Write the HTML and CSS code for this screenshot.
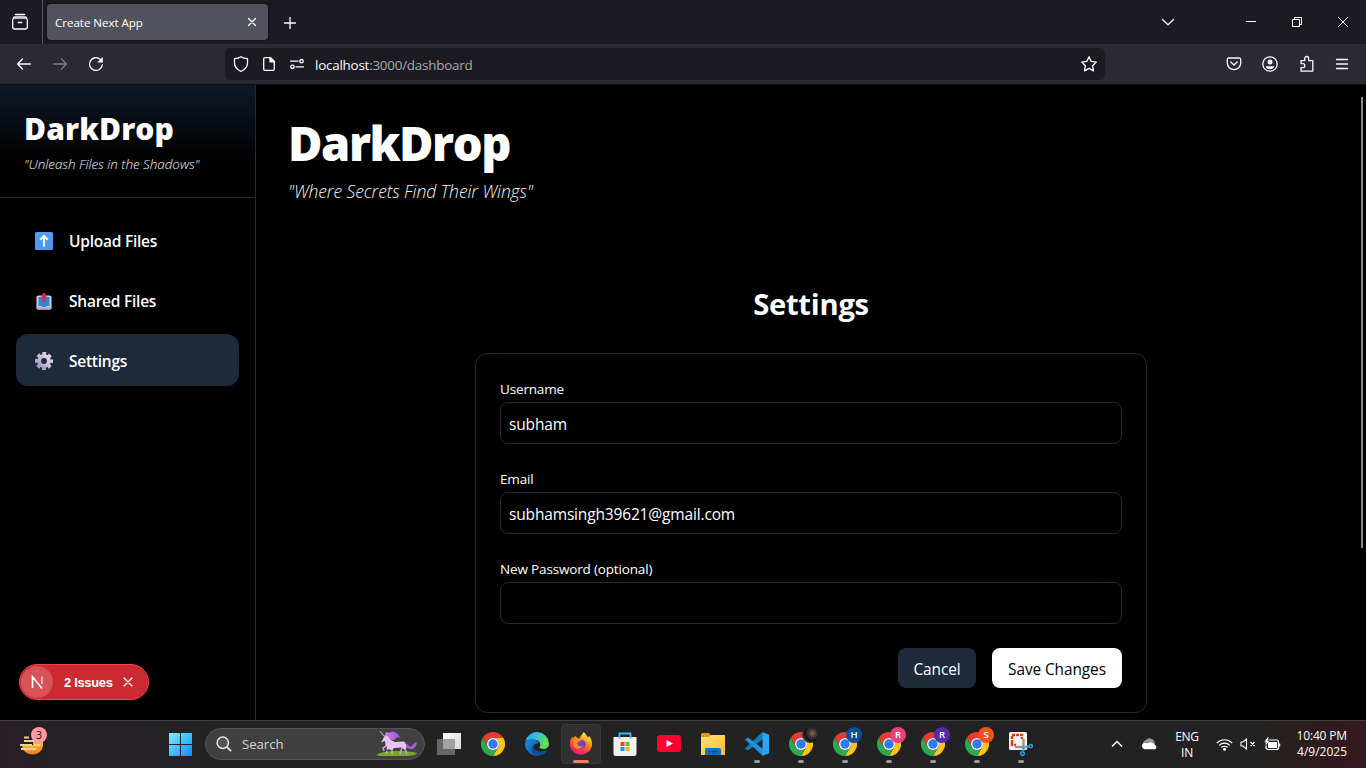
FILE: index.html
```html
<!DOCTYPE html>
<html lang="en">
<head>
<meta charset="utf-8">
<title>Create Next App</title>
<link rel="stylesheet" href="styles.css">
</head>
<body>
<svg class="defs" width="0" height="0">
  <defs>
    <linearGradient id="win" gradientUnits="userSpaceOnUse" x1="0" y1="0" x2="23" y2="23"><stop offset="0" stop-color="#7df0ff"/><stop offset="1" stop-color="#0a8cff"/></linearGradient>
    <linearGradient id="edgeA" x1="0" y1="0" x2="1" y2=".3"><stop offset="0" stop-color="#2b9fe8"/><stop offset=".5" stop-color="#34c1e0"/><stop offset="1" stop-color="#66e04a"/></linearGradient>
    <linearGradient id="edgeB" x1="0" y1="0" x2="1" y2="1"><stop offset="0" stop-color="#1b8ee0"/><stop offset="1" stop-color="#0c57a8"/></linearGradient>
    <linearGradient id="fox" x1=".8" y1="0" x2=".3" y2="1"><stop offset="0" stop-color="#fff44f"/><stop offset=".4" stop-color="#ff980e"/><stop offset=".75" stop-color="#ff3647"/><stop offset="1" stop-color="#e31587"/></linearGradient>
    <linearGradient id="folder" x1="0" y1="0" x2="1" y2="1"><stop offset="0" stop-color="#ffe07a"/><stop offset="1" stop-color="#fcbc29"/></linearGradient>
    <linearGradient id="up" x1="0" y1="0" x2="1" y2="1"><stop offset="0" stop-color="#4ba3f5"/><stop offset="1" stop-color="#5b8fee"/></linearGradient>
    <linearGradient id="gear" x1="1" y1="0" x2="0" y2="1"><stop offset="0" stop-color="#e6dfeb"/><stop offset="1" stop-color="#a995c2"/></linearGradient>
    <linearGradient id="bun" x1="0" y1="0" x2="0" y2="1"><stop offset="0" stop-color="#f9b52e"/><stop offset="1" stop-color="#f07a1c"/></linearGradient>
    <linearGradient id="mane" x1="0" y1="0" x2="1" y2="0"><stop offset="0" stop-color="#e07af0"/><stop offset="1" stop-color="#8a55d8"/></linearGradient>
    <linearGradient id="paneA" x1="0" y1="0" x2="1" y2="1"><stop offset="0" stop-color="#fff"/><stop offset="1" stop-color="#d8d8d8"/></linearGradient>
    <symbol id="chrome" viewBox="0 0 24 24">
      <path d="M1.600 6A12 12 0 0 1 22.400 6H12a6 6 0 0 0-5.200 9z" fill="#e33b2e"/>
      <path d="M22.400 6A12 12 0 0 1 12 24l5.200-9A6 6 0 0 0 12 6z" fill="#fcc31e"/>
      <path d="M1.600 6A12 12 0 0 0 12 24l5.200-9A6 6 0 0 1 6.800 15z" fill="#2da94f"/>
      <circle cx="12" cy="12" r="6" fill="#fff"/><circle cx="12" cy="12" r="4.700" fill="#2f7bee"/>
    </symbol>
  </defs>
</svg>

<header class="tabbar">
  <div class="tabview"><svg width="18" height="18" viewBox="0 0 18 18" class="line"><path d="M4.500 1.500h9M2.500 4.700a2 2 0 0 1 1.500-.8h10a2 2 0 0 1 1.500.8"/><rect x="1.700" y="5.200" width="14.600" height="10.800" rx="2"/><path d="M7.300 9.500h3.400"/></svg></div>
  <div class="tab"><span>Create Next App</span><svg width="10" height="10" viewBox="0 0 10 10" class="line"><path d="M1.500 1.500l7 7M8.500 1.500l-7 7"/></svg></div>
  <svg class="line newtab" width="14" height="14" viewBox="0 0 14 14"><path d="M7 1.500v11M1.500 7h11"/></svg>
  <div class="wincontrols">
    <svg class="line" width="14" height="14" viewBox="0 0 14 14"><path d="M1.500 4.500L7 9.800l5.500-5.300"/></svg>
    <svg class="thin" width="12" height="12" viewBox="0 0 12 12"><path d="M1 5.500h10"/></svg>
    <svg class="thin" width="12" height="12" viewBox="0 0 12 12"><path d="M1.500 3.500h7v7h-7zM3.500 3V1.500h7v7H9"/></svg>
    <svg class="thin" width="12" height="12" viewBox="0 0 12 12"><path d="M1 1l10 10M11 1L1 11"/></svg>
  </div>
</header>

<div class="toolbar">
  <div class="navbuttons">
    <svg class="line" width="16" height="16" viewBox="0 0 16 16"><path d="M14.500 8H1.500M6.500 3L1.500 8l5 5"/></svg>
    <svg class="line dim" width="16" height="16" viewBox="0 0 16 16"><path d="M1.500 8h13M9.500 3l5 5-5 5"/></svg>
    <svg class="line" width="16" height="16" viewBox="0 0 16 16"><path d="M14.300 8.800A6.400 6.400 0 1 1 12.300 3.400"/><path d="M14.800 1v5.600H9.200z" fill="#fbfbfe" stroke="none"/></svg>
  </div>
  <div class="urlbar">
    <svg class="line" width="16" height="18" viewBox="0 0 16 18"><path d="M8 1.700C6.200 3 4 3.500 1.500 3.700V8c0 3.500 2.500 6.500 6.500 8.500 4-2 6.500-5 6.500-8.500V3.700C12 3.500 9.800 3 8 1.700z"/></svg>
    <svg class="line" width="14" height="16" viewBox="0 0 14 16"><path d="M3 1.700h5.500l3.800 3.800V13a1.300 1.300 0 0 1-1.300 1.300H3A1.300 1.300 0 0 1 1.700 13V3A1.300 1.300 0 0 1 3 1.700z"/><path d="M8 1.500v4.300h4.500z" fill="#fbfbfe"/></svg>
    <svg class="line" width="16" height="12" viewBox="0 0 16 12"><path d="M1.500 3.200h7.500M7 8.800h7.500"/><circle cx="12.500" cy="3.200" r="1.700"/><circle cx="3.500" cy="8.800" r="1.700"/></svg>
    <span class="url">localhost<i>:3000/dashboard</i></span>
    <svg class="line star" width="18" height="18" viewBox="0 0 18 18"><path d="M9 1.700l2.200 4.700 5.100.7-3.700 3.600.9 5.200L9 13.400l-4.500 2.500.9-5.200L1.700 7.100l5.100-.7z"/></svg>
  </div>
  <div class="tools">
    <svg class="line" width="16" height="16" viewBox="0 0 16 16"><path d="M2.600 2h10.800A1.300 1.300 0 0 1 14.700 3.300V7A6.700 6.700 0 0 1 1.300 7V3.300A1.300 1.300 0 0 1 2.600 2zM4.800 6L8 9l3.200-3"/></svg>
    <svg class="line" width="16" height="16" viewBox="0 0 16 16"><circle cx="8" cy="8" r="7.200"/><circle cx="8" cy="5.900" r="2.500" fill="#fbfbfe" stroke="none"/><path d="M3.800 10.200h8.400c0 1.700-2 3-4.200 3s-4.200-1.300-4.200-3z" fill="#fbfbfe" stroke="none"/></svg>
    <svg class="line" width="16" height="18" viewBox="0 0 16 18"><path d="M2 5.700h3.700V3.500a2 2 0 0 1 4 0v2.200h4.100v10.500H2v-3.500h1.800a2 2 0 0 0 0-4H2z"/></svg>
    <svg class="line" width="14" height="14" viewBox="0 0 14 14"><path d="M1.500 2.500h11M1.500 7h11M1.500 11.500h11"/></svg>
  </div>
</div>

<div class="page">
  <aside class="sidebar">
    <div class="brand">
      <h2>DarkDrop</h2>
      <p>"Unleash Files in the Shadows"</p>
    </div>
    <nav>
      <a><svg width="18" height="18" viewBox="0 0 18 18"><rect width="18" height="18" rx="1.500" fill="url(#up)"/><path d="M9 14.500v-10M5.300 7.700L9 4l3.700 3.700" fill="none" stroke="#fff" stroke-width="2"/></svg><span>Upload Files</span></a>
      <a><svg width="18" height="18" viewBox="0 0 18 18"><rect x="1.500" y="3.500" width="15" height="14" rx="2" fill="#d5cde0"/><path d="M3.500 5h11v9h-3l-1 1.500h-3l-1-1.500h-3z" fill="#2d86d8"/><path d="M1.500 15h15v1.500a1 1 0 0 1-1 1h-13a1 1 0 0 1-1-1z" fill="#bda9d8"/><path d="M7.300 9.500V4.500H5.500L9 .5l3.500 4h-1.800v5z" fill="#dc2450"/></svg><span>Shared Files</span></a>
      <a class="active"><svg width="18" height="18" viewBox="0 0 18 18"><g fill="none" stroke="url(#gear)"><circle cx="9" cy="9" r="4.900" stroke-width="4"/><circle cx="9" cy="9" r="7.700" stroke-width="2.600" stroke-dasharray="3.800 2.248" stroke-dashoffset="1.900"/></g></svg><span>Settings</span></a>
    </nav>
    <div class="issues">
      <span class="nlogo"><svg width="16" height="16" viewBox="0 0 16 16"><path d="M3.500 14V2.800L13 14.500" fill="none" stroke="#fff" stroke-width="1.600"/><path d="M13 2.500v7.500" stroke="#fff" stroke-opacity=".7" stroke-width="1.500"/></svg></span>
      <b>2 Issues</b>
      <svg width="10" height="10" viewBox="0 0 10 10" class="line"><path d="M1 1l8 8M9 1L1 9"/></svg>
    </div>
  </aside>

  <main>
    <h1>DarkDrop</h1>
    <p class="tagline">"Where Secrets Find Their Wings"</p>
    <section>
      <h3>Settings</h3>
      <form class="card">
        <div class="field"><label>Username</label><div class="input">subham</div></div>
        <div class="field"><label>Email</label><div class="input">subhamsingh39621@gmail.com</div></div>
        <div class="field"><label>New Password (optional)</label><div class="input"></div></div>
        <div class="actions"><button type="button" class="cancel">Cancel</button><button type="button" class="save">Save Changes</button></div>
      </form>
    </section>
    <div class="scrollthumb"></div>
  </main>
</div>

<footer class="taskbar">
  <div class="widget"><svg width="26" height="20" viewBox="0 0 26 20"><path d="M2 10h21a10 9 0 0 1-21 0z" fill="url(#bun)"/><path d="M13 5h10v6H13z" fill="#f9b52e"/><path d="M4 2.500h5M4 6h10M0 10h12m2 0h6M1 14h15" stroke="#f3d28c" stroke-width="2"/></svg><span class="count">3</span></div>
  <div class="apps">
    <div class="app"><svg width="23" height="23" viewBox="0 0 23 23"><path d="M0 0h11v11H0zM12 0h11v11H12zM0 12h11v11H0zM12 12h11v11H12z" fill="url(#win)"/></svg></div>
    <div class="search">
      <svg width="16" height="16" viewBox="0 0 16 16"><circle cx="6.800" cy="6.800" r="5.700" fill="#555" stroke="#e8e8e8" stroke-width="1.500"/><path d="M11 11l4 4" stroke="#e8e8e8" stroke-width="1.800"/></svg>
      <span>Search</span>
      <svg class="unicorn" width="42" height="26" viewBox="0 0 42 26"><path d="M0 24c7-4.500 28-5 41-2 0 2-5 3-14 3H4z" fill="#79a92c"/><path d="M11 20l-1 2.500M16 18v5M29 18l2 5M26 17l-2 6M10 15l-3 2 1 3M13 15l-2 4" stroke="#c9a0df" stroke-width="1.600" fill="none"/><path d="M9 4l3 1 3 4 4 2 8-.5c3 0 4 3 3.500 7l-2 1-3-2-7 .5-3 2-4-1-2-4-.5-4-4 1.500L6 10z" fill="#e6c5ef"/><path d="M9 4l1-3c2 1 3 .5 5 0 4-1 8 2 9 6-2-1-4-.5-5 1.500-3 1.500-5-.5-6-2.500z" fill="url(#mane)"/><path d="M28 12c3-1 4 4 6.500 3.500 2.500 0 2-3.500 6.500-4-1 4.500-3 7-6.500 6.500-4 0-3-4-6.500-6z" fill="#a65ce0"/><path d="M4 0l4 5" stroke="#77b7e0" stroke-width="1.200"/></svg>
    </div>
    <div class="app"><svg width="24" height="22" viewBox="0 0 24 22"><path d="M6 0h18v16H6z" fill="url(#paneA)"/><path d="M0 6h18v16H0z" fill="#666"/><path d="M6 6h12v10H6z" fill="#a2a2a2"/></svg></div>
    <div class="app"><svg width="24" height="24"><use href="#chrome"/></svg></div>
    <div class="app"><svg width="24" height="24" viewBox="0 0 24 24"><path d="M.3 9.500A12 12 0 0 1 24 11.500c.2 3.500-2.300 5.500-5.300 5.500-3 0-4.700-1-4.200-2 1.800-2.500.5-6-3.500-7C7 7 2.500 7.500.3 9.500z" fill="url(#edgeA)"/><path d="M.1 11C2 7 7.500 6.500 10.500 8c2 1 3 2.700 2.700 3.500-5-1-7 6-2 10.500l1.500 1.900A12 12 0 0 1 .1 11z" fill="url(#edgeB)"/><path d="M9 12c-2 6 4 9.500 13.500 6A12 12 0 0 1 12.500 24C6 22 5 15.500 9 12z" fill="#124d91"/></svg></div>
    <div class="app current"><svg width="24" height="24" viewBox="0 0 24 24"><path d="M14.500 0c2.500 1.800 3 3.800 4.200 5.300C20.500 4.500 20.300 4 20.300 4 23 8 23.300 11 22.900 14A11.300 11.300 0 0 1 .8 13.500C.5 9 1.800 6.500 3.400 4.400l.5 2C5.200 4.800 7 4 7 4c.2 1.500 1.500 2.200 3.500 2.400C11.500 3.500 13.500 2.500 14.500 0z" fill="url(#fox)"/><circle cx="12.300" cy="12.300" r="4.600" fill="#7542c8"/><path d="M4 8c3-2.500 7-1 8.500 1-2.500 0-3 1-4.500 2 .5 3 3.500 4 6 3-2 4-8 3.500-10-.5z" fill="#ff8a1c"/></svg></div>
    <div class="app"><svg width="24" height="24" viewBox="0 0 24 24"><path d="M6.500 7V1.500h11V7" fill="none" stroke="#36b8ee" stroke-width="1.800"/><path d="M.5 5h23v16.500a2.500 2.500 0 0 1-2.500 2.500H3A2.500 2.500 0 0 1 .5 21.500z" fill="#f1f1f1"/><path d="M6.500 5v1.500M17.500 5v1.500" stroke="#36b8ee" stroke-width="1.800"/><path d="M7.500 10h4v4h-4z" fill="#e84a26"/><path d="M12.500 10h4v4h-4z" fill="#7cb713"/><path d="M7.500 15h4v4h-4z" fill="#149df0"/><path d="M12.500 15h4v4h-4z" fill="#fbb313"/></svg></div>
    <div class="app"><svg width="24" height="18" viewBox="0 0 24 18"><rect width="24" height="17" rx="3" fill="#ff0033"/><path d="M9.500 5l6.500 3.500L9.500 12z" fill="#fff"/></svg></div>
    <div class="app"><svg width="24" height="22" viewBox="0 0 24 22"><path d="M0 1.500A1.500 1.500 0 0 1 1.500 0H8l2 2.500V5H0z" fill="#dc9c12"/><path d="M0 4h8l2.500-2H24v20H0z" fill="url(#folder)"/><path d="M4 22v-5a2 2 0 0 1 2-2h12a2 2 0 0 1 2 2v5z" fill="#1072c6"/><path d="M7 18h10v1.500H7z" fill="#0a4f92"/></svg></div>
    <div class="app open"><svg width="24" height="24" viewBox="0 0 24 24"><path d="M17.500 0l.5 7L3 18.500 0 16.500z" fill="#0e7dc4"/><path d="M0 7.500l3-2L18 17v7z" fill="#1f93df"/><path d="M17.500 0L24 2.800v18.400L17.500 24z" fill="#2aa3f2"/></svg></div>
    <div class="app open"><svg width="24" height="24"><use href="#chrome"/></svg><span class="badge photo"></span></div>
    <div class="app open"><svg width="24" height="24"><use href="#chrome"/></svg><span class="badge blue">H</span></div>
    <div class="app open"><svg width="24" height="24"><use href="#chrome"/></svg><span class="badge pink">R</span></div>
    <div class="app open"><svg width="24" height="24"><use href="#chrome"/></svg><span class="badge purple">R</span></div>
    <div class="app open"><svg width="24" height="24"><use href="#chrome"/></svg><span class="badge orange">S</span></div>
    <div class="app open"><svg width="24" height="24" viewBox="0 0 24 24"><rect width="18" height="18" rx="1.500" fill="#f5f5f5"/><path d="M3 11V3h10v4M3 11v2h4" fill="none" stroke="#e03c14" stroke-width="2.400" stroke-dasharray="3 1"/><path d="M14.500 7v10M6 15h13" stroke="#9a9a9a" stroke-width="2.400"/><path d="M14.500 15v4M18 14.500h2" stroke="#28a2e0" stroke-width="2"/><circle cx="13.500" cy="21.500" r="1.800" fill="none" stroke="#28a2e0" stroke-width="1.500"/><circle cx="21.800" cy="14" r="1.600" fill="none" stroke="#28a2e0" stroke-width="1.500"/></svg></div>
  </div>
  <div class="tray">
    <svg class="caret" width="12" height="8" viewBox="0 0 12 8"><path d="M1 6.500l5-5 5 5" fill="none" stroke="#fff" stroke-width="1.400"/></svg>
    <svg class="cloud" width="17" height="12" viewBox="0 0 17 12"><path d="M2.500 9A4.500 4.500 0 0 1 5 2a5 5 0 0 1 8.500 2l1 5z" fill="#989898"/><path d="M3.500 11.200a3.200 3.200 0 0 1 0-6.300l3 .3a5 5 0 0 1 7 1.600 2.300 2.300 0 0 1 .5 4.400z" fill="#fff"/></svg>
    <div class="lang"><span>ENG</span><span>IN</span></div>
    <svg class="wifi" width="17" height="13" viewBox="0 0 17 13"><g fill="none" stroke="#fff" stroke-width="1.200"><path d="M.8 5a10.800 10.800 0 0 1 15.400 0M3.200 7.400a7.400 7.400 0 0 1 10.600 0M5.500 9.500a4.200 4.200 0 0 1 6 0"/></g><circle cx="8.500" cy="11.300" r="1.500" fill="#fff"/></svg>
    <svg class="mute" width="16" height="12" viewBox="0 0 16 12"><path d="M1 4h2l3.500-3v10L3 8H1zM10.500 4l4 4M14.500 4l-4 4" fill="none" stroke="#fff" stroke-width="1.100"/></svg>
    <svg class="battery" width="17" height="14" viewBox="0 0 17 14"><rect x="2" y="3" width="12.500" height="9.500" rx="2" fill="none" stroke="#fff" stroke-width="1.200"/><path d="M4 5h9v6H4z" fill="#fff"/><path d="M15.500 6.500v3" stroke="#fff" stroke-width="1.500"/><path d="M3.500 0L0 5h2L1.200 9 6 3.500H3.800L5 0z" fill="#fff" stroke="#222" stroke-width=".5"/></svg>
    <div class="clock"><span class="time">10:40 PM</span><span class="date">4/9/2025</span></div>
  </div>
</footer>
</body>
</html>
```
FILE: styles.css
```css
* { box-sizing: border-box; }
body {
  margin: 0;
  width: 1366px;
  height: 768px;
  overflow: hidden;
  display: flex;
  flex-direction: column;
  background: #000;
  color: #fff;
  font-family: "Open Sans", "Noto Sans", sans-serif;
}
h1, h2, h3, p { margin: 0; }
svg { display: block; flex: none; }
.defs { position: absolute; }
.line { fill: none; stroke: #fbfbfe; stroke-width: 1.3; stroke-linejoin: round; stroke-linecap: round; }
.thin { fill: none; stroke: #fff; stroke-width: 1; }
.dim { opacity: .4; }

/* Browser chrome */
.tabbar { height: 44px; flex: none; display: flex; align-items: center; background: #1c1b22; }
.tabview { width: 43px; height: 44px; padding: 13px 0 0 11px; border-right: 1px solid #55545c; }
.tab {
  width: 221px; height: 36px; margin-left: 4px; padding: 0 11px 0 8px;
  display: flex; align-items: center; justify-content: space-between;
  background: #52525e; border-radius: 4px; font-size: 11.6px; letter-spacing: -.05px;
  box-shadow: 0 0 3px rgba(0, 0, 0, .5);
}
.newtab { margin: 1px 0 0 15px; }
.wincontrols { margin: 0 17px 0 auto; display: flex; align-items: center; gap: 34px; }
.wincontrols svg:first-child { margin-right: 36px; }

.toolbar { height: 41px; flex: none; display: flex; align-items: center; background: #2b2a33; border-bottom: 1px solid #0f0f12; }
.navbuttons { width: 225px; padding-left: 16px; display: flex; gap: 20px; }
.urlbar {
  width: 880px; height: 32px; padding: 0 7px 0 8px;
  display: flex; align-items: center; background: #1c1b22; border-radius: 5px;
}
.urlbar svg:nth-child(2) { margin-left: 13px; }
.urlbar svg:nth-child(3) { margin-left: 13px; }
.url { margin-left: 10px; padding-top: 2px; font-size: 13.4px; letter-spacing: -.22px; color: #fbfbfe; }
.url i { font-style: normal; color: #a9a9ae; }
.star { margin-left: auto; }
.tools { margin-left: auto; padding-right: 17px; display: flex; align-items: center; gap: 20.5px; }

/* Application */
.page { height: 635px; flex: none; display: flex; overflow: hidden; }
.sidebar { width: 256px; flex: none; border-right: 1px solid #1e2939; display: flex; flex-direction: column; }
.brand { height: 113px; padding: 26px 24px 0; border-bottom: 1px solid #1e2939; background: linear-gradient(#101828, #000 68%); }
.brand h2 { font-size: 30px; line-height: 36px; font-weight: 900; letter-spacing: .12px; }
.brand p { margin-top: 7px; font-size: 13.5px; line-height: 20px; font-style: italic; font-weight: 300; letter-spacing: -.06px; color: #f0f3f6; }
nav { padding: 16px; display: flex; flex-direction: column; gap: 8px; }
nav a { height: 52px; padding: 0 20px 0 19px; display: flex; align-items: center; gap: 16px; border-radius: 12px; font-size: 15.5px; font-weight: 600; letter-spacing: -.24px; }
nav a svg { margin-top: 1px; }
nav a span { padding-top: 1px; }
nav .active { background: #1e2939; }
.issues {
  width: 130px; height: 36px; margin: auto 0 20px 19px;
  display: flex; align-items: center; background: #ca2a30; border: 1px solid #e5484d; border-radius: 18px;
}
.nlogo { width: 32px; height: 32px; margin-left: 1px; border-radius: 50%; background: #d65358; display: grid; place-items: center; }
.issues b { width: 49px; margin: 0 10px 0 11px; font: 600 13px "Liberation Sans", sans-serif; letter-spacing: -.35px; white-space: nowrap; }

main { flex: 1; padding: 32px; position: relative; }
h1 { margin-top: 2px; font-size: 47px; line-height: 48px; font-weight: 900; letter-spacing: -1.45px; }
.tagline { margin-top: 10px; font-size: 17.5px; line-height: 28px; font-style: italic; font-weight: 300; letter-spacing: -.07px; color: #f3f5f7; }
section { width: 672px; margin: 81px auto 0; }
h3 { font-size: 29.2px; line-height: 36px; text-align: center; letter-spacing: -.25px; }
.card { height: 360px; margin-top: 31px; padding: 24px; border: 1px solid #1e2939; border-radius: 12px; }
.field { height: 66px; margin-bottom: 24px; }
label { display: block; height: 24px; line-height: 23px; font-size: 13.5px; font-weight: 500; letter-spacing: -.16px; }
.input { height: 42px; padding: 2px 8px 0; border: 1px solid #1e2939; border-radius: 8px; font-size: 15.5px; line-height: 39px; letter-spacing: -.16px; }
.actions { display: flex; justify-content: flex-end; gap: 16px; }
.actions button { height: 40px; padding: 3px 0 0; border: 0; border-radius: 8px; font: 400 15.4px "Open Sans", sans-serif; letter-spacing: -.08px; }
.actions .cancel { width: 78px; background: #1e2939; color: #fff; }
.actions .save { width: 130px; background: #fff; color: #000; }
.scrollthumb { position: absolute; right: 3px; top: 12px; width: 2px; height: 451px; background: #85858a; }

/* Taskbar */
.taskbar {
  height: 48px; flex: none; display: flex; align-items: center; padding-bottom: 1px; border-top: 1px solid #444;
  background: linear-gradient(90deg, #271f24, #242226 8%, #222 18%, #222 92%, #30191c 98%, #35191e);
}
.widget { width: 160px; padding: 2px 0 0 20px; position: relative; }
.count { position: absolute; left: 31px; top: -6px; width: 16px; height: 16px; border-radius: 50%; background: #ff99a4; color: #111; font-size: 10.5px; line-height: 16px; text-align: center; }
.apps { display: flex; align-items: center; gap: 4px; }
.app { width: 40px; height: 40px; display: grid; place-items: center; position: relative; }
.search {
  width: 220px; height: 32px; margin: 0 0 0 1px; padding: 0 6px 0 10px;
  display: flex; align-items: center; background: #404040; border: 1px solid #555; border-radius: 16px;
}
.search span { margin-left: 10px; font-size: 13.2px; letter-spacing: -.05px; color: #d6d6d6; }
.unicorn { margin-left: auto; }
.current { background: #303030; border: 1px solid #3a3a3a; border-radius: 4px; }
.current::after, .open::after { content: ""; position: absolute; bottom: 1px; left: 17px; width: 6px; height: 3px; border-radius: 2px; background: #999; }
.current::after { left: 11px; bottom: 0; width: 16px; background: #f47b5f; }
.badge { position: absolute; left: 21px; top: 3px; width: 16px; height: 16px; border-radius: 50%; color: #fff; font: 600 9.5px/16px "Open Sans", sans-serif; text-align: center; }
.photo { background: radial-gradient(circle at 65% 40%, #8a6660, #3a3434 30%, #131313 55%, #4a4a4a 75%); }
.blue { background: #03529a; }
.pink { background: #ec407a; }
.purple { background: #512da8; }
.orange { background: #f4511e; }
.tray { margin-left: auto; display: flex; align-items: center; font-size: 12px; line-height: 16px; }
.cloud { margin-left: 18px; }
.lang { width: 30px; margin-left: 14px; padding-top: 1px; text-align: center; display: flex; flex-direction: column; letter-spacing: -.3px; }
.wifi { margin-left: 14px; }
.mute { margin-left: 7px; }
.battery { margin-left: 8px; }
.clock { width: 51px; margin: 0 19px 0 15px; display: flex; flex-direction: column; text-align: right; white-space: nowrap; }
.time { letter-spacing: -.15px; }
```
